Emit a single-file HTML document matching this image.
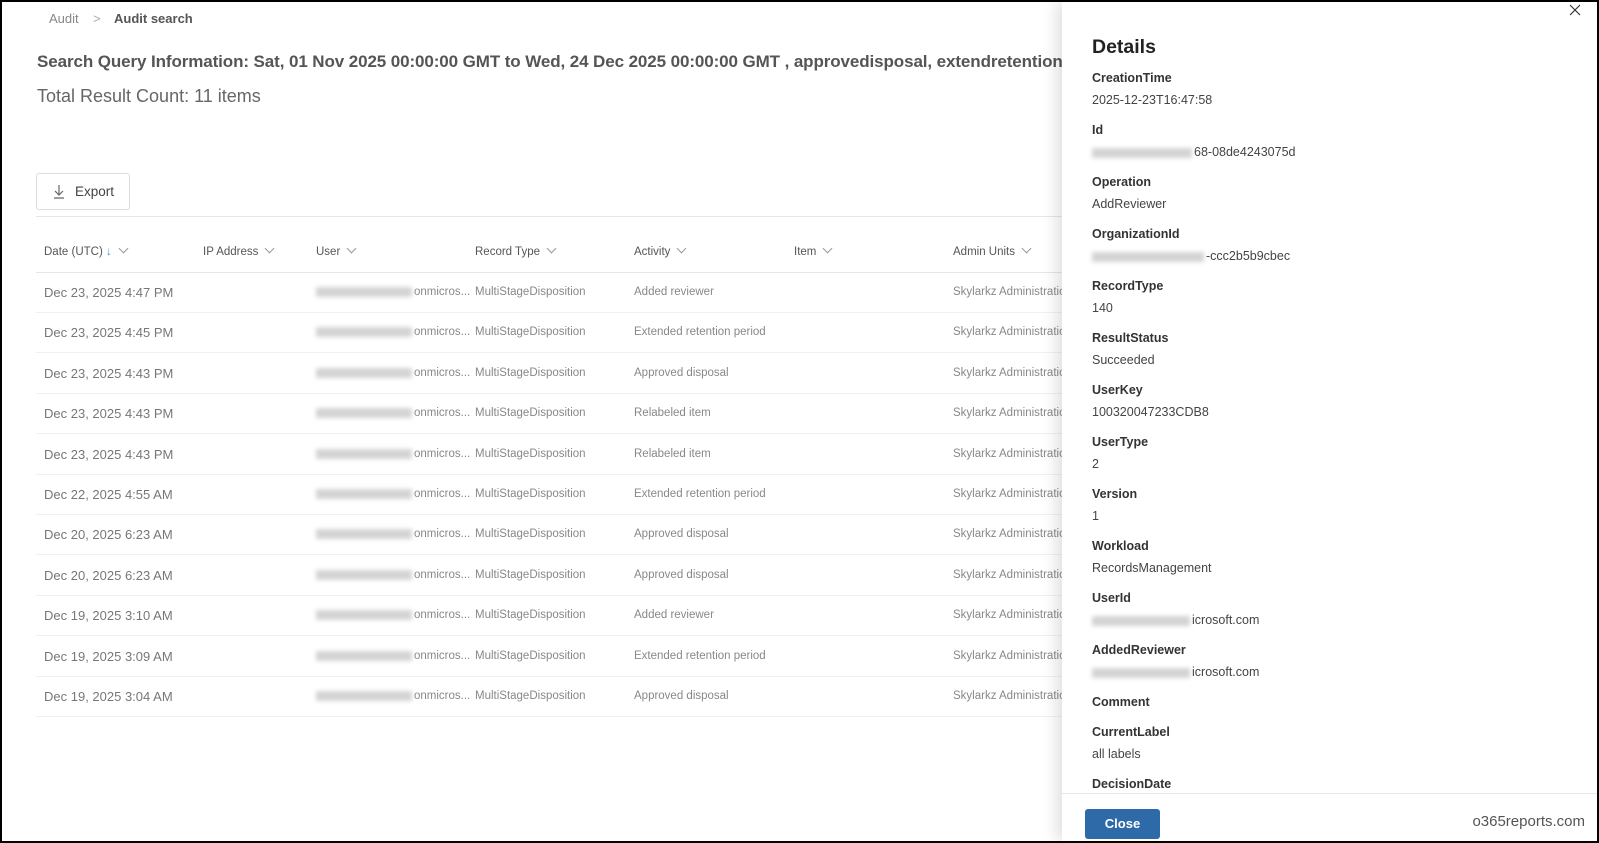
<!DOCTYPE html>
<html><head><meta charset="utf-8"><style>
*{box-sizing:border-box;margin:0;padding:0}
html,body{width:1599px;height:843px;overflow:hidden;background:#fff;font-family:"Liberation Sans",sans-serif}
.frame{position:absolute;left:0;top:0;width:1599px;height:843px;border:2px solid #000;}
.abs{position:absolute;white-space:nowrap}
.bc{top:11px;font-size:13px;color:#888}
.title{left:37px;top:52px;font-size:17px;color:#555;font-weight:bold;letter-spacing:-0.1px}
.total{left:37px;top:86px;font-size:18px;color:#666}
.export{left:36px;top:173px;width:94px;height:37px;border:1px solid #ddd;border-radius:3px;font-size:13.5px;color:#444}
.hl{left:36px;height:1px;background:#e6e6e6;width:1030px}
.hd{top:246px;font-size:11.5px;color:#555}
.chev{display:inline-block;width:7px;height:7px;border-right:1px solid #999;border-bottom:1px solid #999;transform:rotate(45deg);margin-left:8px;position:relative;top:-3px}
.cell{font-size:11.5px;color:#888}
.date{font-size:13px;color:#777}
.blur{display:inline-block;width:96px;height:10px;background:#d4d4d4;filter:blur(2px);vertical-align:middle;margin-right:2px}
.panel{left:1062px;top:2px;width:535px;height:839px;background:#fff;box-shadow:-6px 0 14px rgba(0,0,0,0.12)}
.lab{left:30px;font-size:12.5px;font-weight:bold;color:#333}
.val{left:30px;font-size:12.5px;color:#444}
</style></head><body>
<div class="abs bc" style="left:49px">Audit</div>
<div class="abs bc" style="left:93px;color:#aaa">&gt;</div>
<div class="abs bc" style="left:114px;color:#555;font-weight:bold">Audit search</div>
<div class="abs title">Search Query Information: Sat, 01 Nov 2025 00:00:00 GMT to Wed, 24 Dec 2025 00:00:00 GMT , approvedisposal, extendretention</div>
<div class="abs total">Total Result Count: 11 items</div>
<div class="abs export"><svg style="position:absolute;left:16px;top:10px" width="12" height="15" viewBox="0 0 12 15"><path d="M6 1v10M2 7l4 4 4-4M1 14h10" stroke="#666" fill="none" stroke-width="1.2"/></svg><span style="position:absolute;left:38px;top:10px">Export</span></div>
<div class="abs hl" style="top:216px"></div>
<div class="abs hd" style="left:44px">Date (UTC) <span style="color:#4a90d9">↓</span><span class="chev"></span></div>
<div class="abs hd" style="left:203px">IP Address<span class="chev"></span></div>
<div class="abs hd" style="left:316px">User<span class="chev"></span></div>
<div class="abs hd" style="left:475px">Record Type<span class="chev"></span></div>
<div class="abs hd" style="left:634px">Activity<span class="chev"></span></div>
<div class="abs hd" style="left:794px">Item<span class="chev"></span></div>
<div class="abs hd" style="left:953px">Admin Units<span class="chev"></span></div>
<div class="abs hl" style="top:272px"></div>
<div id="rows"></div>
<script>
var d=[["Dec 23, 2025 4:47 PM","Added reviewer"],["Dec 23, 2025 4:45 PM","Extended retention period"],["Dec 23, 2025 4:43 PM","Approved disposal"],["Dec 23, 2025 4:43 PM","Relabeled item"],["Dec 23, 2025 4:43 PM","Relabeled item"],["Dec 22, 2025 4:55 AM","Extended retention period"],["Dec 20, 2025 6:23 AM","Approved disposal"],["Dec 20, 2025 6:23 AM","Approved disposal"],["Dec 19, 2025 3:10 AM","Added reviewer"],["Dec 19, 2025 3:09 AM","Extended retention period"],["Dec 19, 2025 3:04 AM","Approved disposal"]];
var h="";d.forEach(function(r,i){var y=293+i*40.4;
h+='<div class="abs date" style="left:44px;top:'+(y-8)+'px">'+r[0]+'</div>';
h+='<div class="abs cell" style="left:316px;top:'+(y-7)+'px"><span class="blur"></span>onmicros...</div>';
h+='<div class="abs cell" style="left:475px;top:'+(y-7)+'px">MultiStageDisposition</div>';
h+='<div class="abs cell" style="left:634px;top:'+(y-7)+'px">'+r[1]+'</div>';
h+='<div class="abs cell" style="left:953px;top:'+(y-7)+'px">Skylarkz Administration</div>';
h+='<div class="abs hl" style="top:'+(y+19)+'px;background:#f0f0f0"></div>';});
document.getElementById("rows").innerHTML=h;
</script>
<div class="abs panel">
<svg style="position:absolute;left:506px;top:1px" width="14" height="14" viewBox="0 0 14 14"><path d="M2 2l10 10M12 2L2 12" stroke="#333" stroke-width="1.2"/></svg>
<div class="abs" style="left:30px;top:34px;font-size:19.5px;font-weight:bold;color:#222">Details</div>
<div id="f"></div>
<div class="abs" style="left:0;top:791px;width:535px;height:1px;background:#e6e6e6"></div>
<div class="abs" style="left:23px;top:807px;width:75px;height:30px;background:#2f6aa8;border-radius:3px;color:#fff;font-size:13px;font-weight:bold;text-align:center;line-height:30px">Close</div>
<div class="abs" style="right:12px;top:811px;font-size:15px;color:#555">o365reports.com</div>
</div>
<script>
var f=[["CreationTime","2025-12-23T16:47:58"],["Id","<span class=blur style=width:100px></span>68-08de4243075d"],["Operation","AddReviewer"],["OrganizationId","<span class=blur style=width:112px></span>-ccc2b5b9cbec"],["RecordType","140"],["ResultStatus","Succeeded"],["UserKey","100320047233CDB8"],["UserType","2"],["Version","1"],["Workload","RecordsManagement"],["UserId","<span class=blur style=width:98px></span>icrosoft.com"],["AddedReviewer","<span class=blur style=width:98px></span>icrosoft.com"],["Comment",""],["CurrentLabel","all labels"],["DecisionDate",""]];
var g="";f.forEach(function(r,i){var y=69+i*52;if(i>=13)y-=22;
g+='<div class="abs lab" style="top:'+y+'px">'+r[0]+'</div>';
if(r[1])g+='<div class="abs val" style="top:'+(y+22)+'px">'+r[1]+'</div>';});
document.querySelectorAll(".panel #f")[0].innerHTML=g;
</script>
<div class="frame"></div>
</body></html>
